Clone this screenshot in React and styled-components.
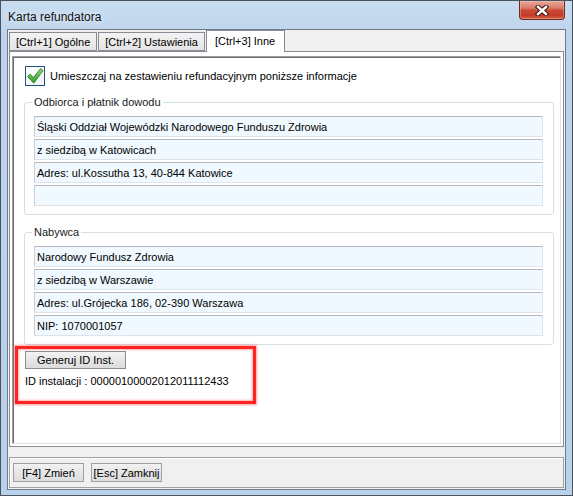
import React from "react";
import styled, { createGlobalStyle } from "styled-components";

const GlobalStyle = createGlobalStyle`
	html, body {
		margin: 0;
		padding: 0;
		background: #ffffff;
	}
	body {
		font-family: "Liberation Sans", Arial, sans-serif;
		font-size: 11px;
		color: #000;
	}
`;

const Window = styled.div`
	width: 573px;
	height: 496px;
	box-sizing: border-box;
	border: 1px solid #4a525c;
	background: linear-gradient(to bottom, #c9ddf1, #bcd3eb 40px, #b9d1ea);
	padding: 0 6px 5px 6px;
	display: flex;
	flex-direction: column;
`;

const TitleBar = styled.div`
	height: 28px;
	display: flex;
	align-items: flex-start;
	justify-content: space-between;
	padding-left: 1px;
`;

const Title = styled.div`
	font-size: 12px;
	line-height: 28px;
	padding-top: 2px;
	color: #111;
	text-shadow: 0 0 6px rgba(255, 255, 255, 0.9);
`;

const CloseButton = styled.div`
	width: 46px;
	height: 19px;
	box-sizing: border-box;
	margin-right: 1px;
	border: 1px solid #6b2a22;
	border-top: none;
	border-radius: 0 0 4px 4px;
	background: linear-gradient(
		to bottom,
		#e8a89b 0%,
		#d97a69 40%,
		#c94a36 50%,
		#c43a26 80%,
		#d4664a 100%
	);
	box-shadow: inset 0 0 0 1px rgba(255, 210, 200, 0.35);
	display: flex;
	align-items: center;
	justify-content: center;
`;

const Client = styled.div`
	flex: 1;
	border: 1px solid #6f7b89;
	background: #f0f0f0;
	display: flex;
	flex-direction: column;
	padding-left: 1px;
`;

const TabRow = styled.div`
	height: 21px;
	display: flex;
	align-items: flex-end;
`;

const Tab = styled.div`
	box-sizing: border-box;
	height: ${(p) => (p.active ? "22px" : "19px")};
	margin-bottom: ${(p) => (p.active ? "-1px" : "0")};
	margin-right: ${(p) => (p.active ? "0" : "1px")};
	padding: ${(p) => (p.active ? "3px 9px 0 8px" : "2px 6px 0 6px")};
	border: 1px solid #898c95;
	border-bottom: ${(p) => (p.active ? "none" : "1px solid #898c95")};
	background: ${(p) =>
		p.active ? "#ffffff" : "linear-gradient(to bottom, #f3f3f3, #e4e4e4)"};
	position: relative;
	z-index: ${(p) => (p.active ? 1 : 0)};
	line-height: 14px;
	white-space: nowrap;
`;

const TabPage = styled.div`
	width: 555px;
	height: 396px;
	box-sizing: border-box;
	border: 1px solid #898c95;
	background: #ffffff;
	padding: 4px 2px 2px 2px;
	display: flex;
`;

const InnerPanel = styled.div`
	flex: 1;
	border-style: solid;
	border-width: 1px;
	border-color: #a0a0a0 #e3e3e3 #e3e3e3 #a0a0a0;
	box-shadow: inset 1px 1px 0 #6d6d6d;
	display: flex;
	flex-direction: column;
`;

const CheckRow = styled.div`
	display: flex;
	align-items: center;
	gap: 5px;
	margin: 9px 0 0 12px;
	height: 20px;
`;

const CheckBox = styled.div`
	width: 20px;
	height: 20px;
	box-sizing: border-box;
	border: 1px solid #1f4f7d;
	background: linear-gradient(to bottom right, #ffffff, #eef2f6);
	display: flex;
	align-items: center;
	justify-content: center;
`;

const Group = styled.fieldset`
	margin: ${(p) => p.top}px 6px 0 11px;
	padding: 7px 10px 8px 9px;
	border: 1px solid #d5dfe5;
	border-radius: 3px;
	box-shadow: inset 1px 1px 0 #ffffff;
	display: flex;
	flex-direction: column;
	gap: 2px;
	min-width: 0;
`;

const Legend = styled.legend`
	padding: 0 2px;
	margin-left: -2px;
	line-height: 13px;
	color: #1a1a1a;
`;

const Field = styled.div`
	height: 21px;
	box-sizing: border-box;
	border: 1px solid;
	border-color: #b4b8bd #dfe4e8 #dfe4e8 #c9ccd0;
	background: #f0f9ff;
	padding-left: 2px;
	display: flex;
	align-items: center;
	white-space: nowrap;
`;

const Highlight = styled.div`
	width: 241px;
	height: 58px;
	box-sizing: border-box;
	margin: 1px 0 0 2px;
	border: 3px solid #ff2424;
	box-shadow: 0 0 2px 1px rgba(255, 80, 80, 0.55),
		inset 0 0 2px 1px rgba(255, 80, 80, 0.45);
	padding: 2px 0 0 7px;
	display: flex;
	flex-direction: column;
	align-items: flex-start;
`;

const Button = styled.div`
	width: ${(p) => p.w}px;
	height: ${(p) => p.h}px;
	box-sizing: border-box;
	border: 1px solid ${(p) => p.edge || "#8e8e8e"};
	background: linear-gradient(to bottom, #f2f2f2 0%, #e6e6e6 50%, #dcdcdc 100%);
	display: flex;
	align-items: center;
	justify-content: center;
	white-space: nowrap;
`;

const InfoLine = styled.div`
	margin-top: 6px;
	line-height: 13px;
`;

const Spacer = styled.div`
	height: 10px;
`;

const BottomBar = styled.div`
	width: 555px;
	height: 31px;
	box-sizing: border-box;
	border: 1px solid #a0a0a0;
	box-shadow: inset 1px 1px 0 #ffffff;
	padding: 5px 0 0 3px;
	display: flex;
	align-items: flex-start;
	gap: 7px;
`;

const CloseIcon = () => (
	<svg width="14" height="11" viewBox="0 0 14 11">
		<path
			d="M3 2 L11 9 M11 2 L3 9"
			stroke="#3b1712"
			strokeWidth="4.4"
			strokeLinecap="square"
		/>
		<path
			d="M3 2 L11 9 M11 2 L3 9"
			stroke="#ffffff"
			strokeWidth="2.4"
			strokeLinecap="square"
		/>
	</svg>
);

const CheckIcon = () => (
	<svg width="18" height="18" viewBox="0 0 18 18">
		<defs>
			<linearGradient id="chk" x1="0" y1="0" x2="0" y2="1">
				<stop offset="0" stopColor="#8fdc72" />
				<stop offset="1" stopColor="#2f9b2c" />
			</linearGradient>
		</defs>
		<path
			d="M1.5 9.5 L4.2 7.2 L7.4 10.6 L14.6 1.6 L17 3.6 L7.8 16.2 Z"
			fill="url(#chk)"
			stroke="#2e7f2b"
			strokeWidth="0.9"
			strokeLinejoin="round"
		/>
	</svg>
);

const payer = [
	"Śląski Oddział Wojewódzki Narodowego Funduszu Zdrowia",
	"z siedzibą w Katowicach",
	"Adres: ul.Kossutha 13, 40-844 Katowice",
	"",
];

const buyer = [
	"Narodowy Fundusz Zdrowia",
	"z siedzibą w Warszawie",
	"Adres: ul.Grójecka 186, 02-390 Warszawa",
	"NIP: 1070001057",
];

const App = () => (
	<>
		<GlobalStyle />
		<Window>
			<TitleBar>
				<Title>Karta refundatora</Title>
				<CloseButton>
					<CloseIcon />
				</CloseButton>
			</TitleBar>
			<Client>
				<TabRow>
					<Tab>[Ctrl+1] Ogólne</Tab>
					<Tab>[Ctrl+2] Ustawienia</Tab>
					<Tab active>[Ctrl+3] Inne</Tab>
				</TabRow>
				<TabPage>
					<InnerPanel>
						<CheckRow>
							<CheckBox>
								<CheckIcon />
							</CheckBox>
							<span>Umieszczaj na zestawieniu refundacyjnym poniższe informacje</span>
						</CheckRow>
						<Group top={10}>
							<Legend>Odbiorca i płatnik dowodu</Legend>
							{payer.map((t, i) => (
								<Field key={i}>{t}</Field>
							))}
						</Group>
						<Group top={11}>
							<Legend>Nabywca</Legend>
							{buyer.map((t, i) => (
								<Field key={i}>{t}</Field>
							))}
						</Group>
						<Highlight>
							<Button w={101} h={18}>
								Generuj ID Inst.
							</Button>
							<InfoLine>ID instalacji : 00000100002012011112433</InfoLine>
						</Highlight>
					</InnerPanel>
				</TabPage>
				<Spacer />
				<BottomBar>
					<Button w={71} h={19} edge="#a0a0a0">
						[F4] Zmień
					</Button>
					<Button w={71} h={19} edge="#a0a0a0">
						[Esc] Zamknij
					</Button>
				</BottomBar>
			</Client>
		</Window>
	</>
);

export default App;
